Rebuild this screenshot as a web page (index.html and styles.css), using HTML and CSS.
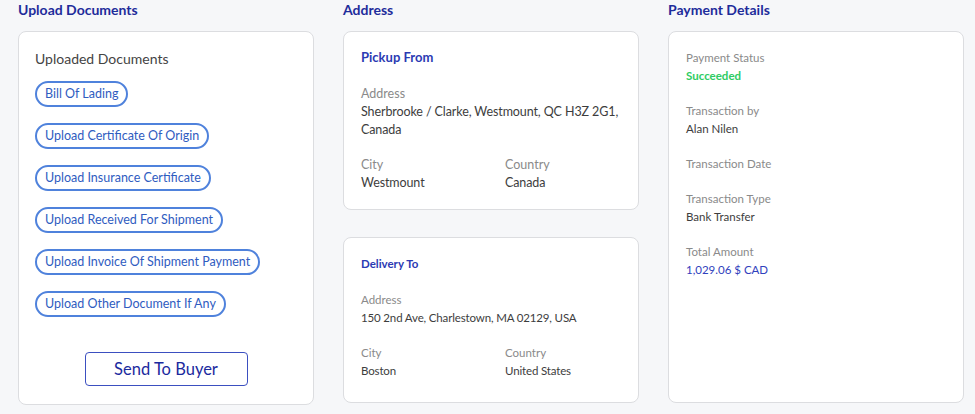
FILE: index.html
```html
<!DOCTYPE html>
<html lang="en">
<head>
    <meta charset="UTF-8">
    <meta name="viewport" content="width=device-width, initial-scale=1.0">
    <title>Shipment Details</title>
    <link rel="stylesheet" href="styles.css">
</head>
<body>
    <div class="page">
        <section class="column">
            <h2 class="section-title">Upload Documents</h2>
            <div class="card docs-card">
                <p class="docs-title">Uploaded Documents</p>
                <div class="doc-list">
                    <span class="doc-pill">Bill Of Lading</span>
                    <span class="doc-pill">Upload Certificate Of Origin</span>
                    <span class="doc-pill">Upload Insurance Certificate</span>
                    <span class="doc-pill">Upload Received For Shipment</span>
                    <span class="doc-pill">Upload Invoice Of Shipment Payment</span>
                    <span class="doc-pill">Upload Other Document If Any</span>
                </div>
                <button class="send-button">Send To Buyer</button>
            </div>
        </section>

        <section class="column">
            <h2 class="section-title">Address</h2>
            <div class="card address-card">
                <h3 class="card-title">Pickup From</h3>
                <div class="field">
                    <span class="field-label">Address</span>
                    <span class="field-value">Sherbrooke / Clarke, Westmount, QC H3Z 2G1, Canada</span>
                </div>
                <div class="field-row">
                    <div class="field">
                        <span class="field-label">City</span>
                        <span class="field-value">Westmount</span>
                    </div>
                    <div class="field">
                        <span class="field-label">Country</span>
                        <span class="field-value">Canada</span>
                    </div>
                </div>
            </div>
            <div class="card address-card small">
                <h3 class="card-title">Delivery To</h3>
                <div class="field">
                    <span class="field-label">Address</span>
                    <span class="field-value">150 2nd Ave, Charlestown, MA 02129, USA</span>
                </div>
                <div class="field-row">
                    <div class="field">
                        <span class="field-label">City</span>
                        <span class="field-value">Boston</span>
                    </div>
                    <div class="field">
                        <span class="field-label">Country</span>
                        <span class="field-value">United States</span>
                    </div>
                </div>
            </div>
        </section>

        <section class="column">
            <h2 class="section-title">Payment Details</h2>
            <div class="card payment-card">
                <div class="field">
                    <span class="field-label">Payment Status</span>
                    <span class="field-value success">Succeeded</span>
                </div>
                <div class="field">
                    <span class="field-label">Transaction by</span>
                    <span class="field-value">Alan Nilen</span>
                </div>
                <div class="field">
                    <span class="field-label">Transaction Date</span>
                </div>
                <div class="field">
                    <span class="field-label">Transaction Type</span>
                    <span class="field-value">Bank Transfer</span>
                </div>
                <div class="field">
                    <span class="field-label">Total Amount</span>
                    <span class="field-value amount">1,029.06 $ CAD</span>
                </div>
            </div>
        </section>
    </div>
</body>
</html>
```

FILE: styles.css
```css
body {
    margin: 0;
    background-color: #f6f7f9;
    font-family: Lato, "Noto Sans", sans-serif;
    color: #3d3d3d;
}
.page {
    display: flex;
    gap: 29px;
    height: 414px;
    padding: 0 11px 11px 18px;
    box-sizing: border-box;
}
.column {
    width: 296px;
    display: flex;
    flex-direction: column;
    gap: 27px;
}
.section-title {
    margin: 0 0 -16px;
    font-size: 14px;
    line-height: 20px;
    font-weight: 700;
    color: #1e2c9b;
}
.card {
    background-color: #fff;
    border: 1.5px solid #dcdde0;
    border-radius: 8px;
    box-sizing: border-box;
}

/* upload documents */
.docs-card {
    flex: 1;
    padding: 18px 16px;
    display: flex;
    flex-direction: column;
    align-items: flex-start;
}
.docs-title {
    margin: 0 0 13px;
    font-size: 14px;
    line-height: 18px;
    color: #444;
}
.doc-list {
    display: flex;
    flex-direction: column;
    align-items: flex-start;
    gap: 16px;
}
.doc-pill {
    display: inline-block;
    height: 26px;
    line-height: 22px;
    padding: 0 8px;
    border: 2px solid #4f82dc;
    border-radius: 13px;
    box-sizing: border-box;
    font-size: 12.5px;
    color: #2f5cbf;
}
.send-button {
    align-self: center;
    margin-top: 35px;
    width: 163px;
    height: 34px;
    background-color: #fff;
    border: 1px solid #3b4fc0;
    border-radius: 4px;
    font-family: inherit;
    font-size: 16.5px;
    color: #1b2a9e;
    cursor: pointer;
}

/* address + payment fields */
.address-card {
    padding: 16px 12px 17px 17px;
}
.address-card.small {
    flex: 1;
    padding-top: 17px;
}
.card-title {
    margin: 0 0 19px;
    font-size: 13px;
    line-height: 18px;
    font-weight: 700;
    color: #2b3ab3;
}
.small .card-title {
    font-size: 11.5px;
    margin-bottom: 18px;
}
.field {
    display: flex;
    flex-direction: column;
}
.field-label {
    font-size: 12.5px;
    line-height: 18px;
    color: #8a8a8a;
}
.field-value {
    font-size: 12.5px;
    line-height: 18px;
    letter-spacing: -0.1px;
    color: #3d3d3d;
}
.small .field-label,
.small .field-value {
    font-size: 11.5px;
}
.small .field-value {
    letter-spacing: -0.15px;
}
.field-row {
    display: grid;
    grid-template-columns: 144px 1fr;
    margin-top: 17px;
}
.payment-card {
    flex: 1;
    padding: 17px 17px;
    display: flex;
    flex-direction: column;
    gap: 17px;
}
.payment-card .field-label,
.payment-card .field-value {
    font-size: 11.5px;
    letter-spacing: 0;
}
.success {
    color: #2ecc63;
    font-weight: 700;
}
.amount {
    color: #3041bd;
}
```
